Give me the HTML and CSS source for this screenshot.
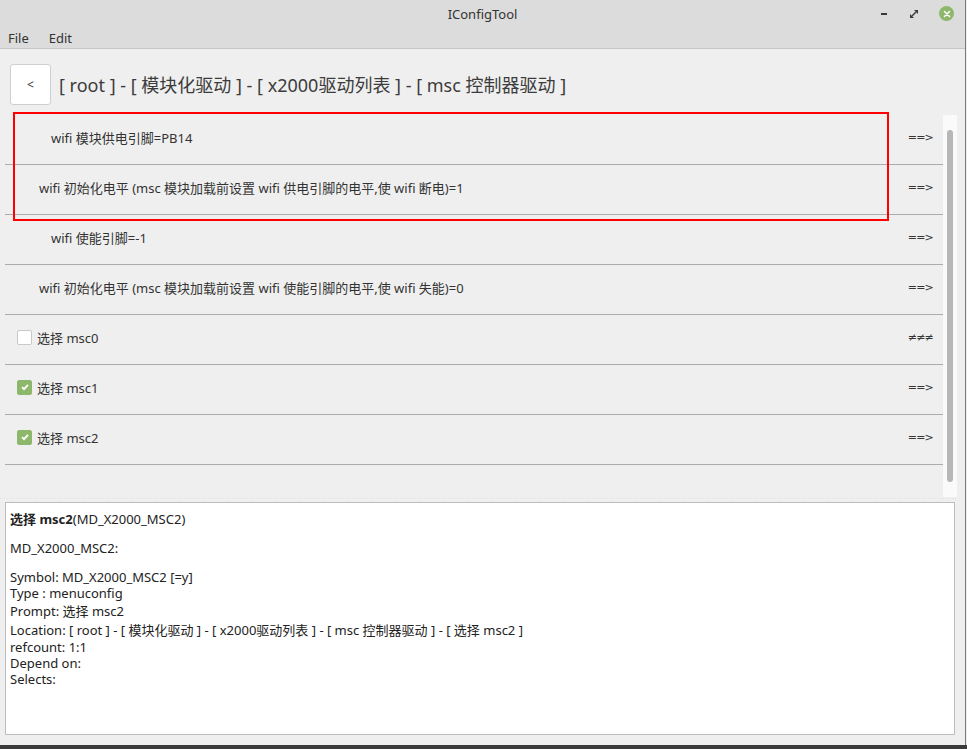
FILE: index.html
```html
<!DOCTYPE html>
<html lang="zh-CN">
<head>
    <meta charset="UTF-8">
    <title>IConfigTool</title>
    <link rel="stylesheet" href="styles.css">
</head>
<body>
    <div class="window">
        <div class="titlebar">
            <span></span>
            <span class="title">IConfigTool</span>
            <div class="controls">
                <span class="min"></span>
                <svg class="restore" width="8" height="8" viewBox="0 0 8 8">
                    <path d="M4 0h4v4zM0 4l4 4H0z" fill="#3a3a3a"/>
                    <path d="M2 6L6 2" stroke="#3a3a3a" stroke-width="1.4"/>
                </svg>
                <span class="close">
                    <svg width="8" height="8" viewBox="0 0 8 8">
                        <path d="M1.5 1.5l5 5M6.5 1.5l-5 5" stroke="#fff" stroke-width="1.6" stroke-linecap="round"/>
                    </svg>
                </span>
            </div>
        </div>
        <div class="menubar">
            <span>File</span>
            <span>Edit</span>
        </div>

        <div class="crumb">
            <button class="back">&lt;</button>
            <span class="path">[ root ] - [ 模块化驱动 ] - [ x2000驱动列表 ] - [ msc 控制器驱动 ]</span>
        </div>

        <div class="listarea">
            <div class="list">
                <div class="row indent2"><span>wifi 模块供电引脚=PB14</span><span class="arrow">==&gt;</span></div>
                <div class="row indent1"><span>wifi 初始化电平 (msc 模块加载前设置 wifi 供电引脚的电平,使 wifi 断电)=1</span><span class="arrow">==&gt;</span></div>
                <div class="row indent2"><span>wifi 使能引脚=-1</span><span class="arrow">==&gt;</span></div>
                <div class="row indent1"><span>wifi 初始化电平 (msc 模块加载前设置 wifi 使能引脚的电平,使 wifi 失能)=0</span><span class="arrow">==&gt;</span></div>
                <div class="row check"><span class="label"><span class="box"></span>选择 msc0</span><span class="arrow">≠≠≠</span></div>
                <div class="row check"><span class="label"><span class="box on"><svg width="10" height="10" viewBox="0 0 10 10"><path d="M2 5.2l2 2 4-4.4" fill="none" stroke="#fff" stroke-width="1.8"/></svg></span>选择 msc1</span><span class="arrow">==&gt;</span></div>
                <div class="row check"><span class="label"><span class="box on"><svg width="10" height="10" viewBox="0 0 10 10"><path d="M2 5.2l2 2 4-4.4" fill="none" stroke="#fff" stroke-width="1.8"/></svg></span>选择 msc2</span><span class="arrow">==&gt;</span></div>
                <div class="highlight"></div>
            </div>
            <div class="scrollbar"><div class="thumb"></div></div>
        </div>

        <div class="splitter"></div>

        <div class="info">
            <p><b>选择 msc2</b>(MD_X2000_MSC2)</p>
            <p class="gap">MD_X2000_MSC2:</p>
            <p class="gap">Symbol: MD_X2000_MSC2 [=y]</p>
            <p>Type : menuconfig</p>
            <p class="cjk">Prompt: 选择 msc2</p>
            <p class="cjk2">Location: [ root ] - [ 模块化驱动 ] - [ x2000驱动列表 ] - [ msc 控制器驱动 ] - [ 选择 msc2 ]</p>
            <p>refcount: 1:1</p>
            <p>Depend on:</p>
            <p>Selects:</p>
        </div>
        <div class="footer"></div>
    </div>
    <div class="behind"></div>
</body>
</html>
```

FILE: styles.css
```css
body {
    margin: 0;
    font-family: "Noto Sans", "Noto Sans CJK SC", sans-serif;
    font-size: 13px;
    color: #333;
    background: #efefef;
    width: 967px;
    height: 749px;
    overflow: hidden;
}

.window {
    width: 965px;
    height: 745px;
    border-right: 1px solid #7a7a7a;
    background: #efefef;
    display: flex;
    flex-direction: column;
}

.titlebar {
    height: 29px;
    background: #dcdcdc;
    display: grid;
    grid-template-columns: 1fr auto 1fr;
    align-items: center;
}

.title {
    font-size: 13px;
    color: #333;
    margin-top: -2px;
}

.controls {
    justify-self: end;
    display: flex;
    align-items: center;
    padding-right: 11px;
    margin-top: -2px;
}

.min {
    width: 6px;
    height: 2px;
    background: #3a3a3a;
    margin-right: 23px;
}

.restore {
    margin-right: 21px;
}

.close {
    width: 15px;
    height: 15px;
    border-radius: 50%;
    background: #8db86b;
    display: flex;
    align-items: center;
    justify-content: center;
}

.menubar {
    height: 19px;
    background: #dcdcdc;
    border-bottom: 1px solid #c6c6c6;
    display: flex;
    gap: 20px;
    padding-left: 8px;
    align-items: flex-start;
    line-height: 18px;
}

.crumb {
    display: flex;
    align-items: center;
    padding: 15px 0 0 10px;
    height: 41px;
}

.back {
    width: 41px;
    height: 41px;
    background: #fff;
    border: 1px solid #cfcfcf;
    border-radius: 3px;
    font-family: "Noto Sans", sans-serif;
    font-size: 12px;
    color: #333;
    padding: 0;
    margin-right: 8px;
}

.path {
    font-size: 18px;
    color: #3c3c3c;
    margin-top: -2px;
}

.listarea {
    margin-top: 10px;
    display: flex;
    height: 382px;
}

.list {
    position: relative;
    margin-left: 5px;
    width: 938px;
}

.row {
    height: 49px;
    box-sizing: border-box;
    height: 50px;
    border-bottom: 1px solid #acacac;
    display: flex;
    align-items: center;
    justify-content: space-between;
    padding-right: 10px;
    padding-bottom: 5px;
}

.indent2 { padding-left: 46px; }
.indent1 { padding-left: 34px; }
.check { padding-left: 12px; }

.label {
    display: flex;
    align-items: center;
}

.box {
    width: 13px;
    height: 13px;
    border: 1px solid #c8c8c8;
    background: #fff;
    border-radius: 2px;
    margin-right: 5px;
    display: flex;
    align-items: center;
    justify-content: center;
}

.box.on {
    background: #8db86b;
    border-color: #8db86b;
}

.arrow {
    font-family: "DejaVu Sans", sans-serif;
    font-size: 11px;
    color: #333;
    letter-spacing: -0.8px;
}

.highlight {
    position: absolute;
    left: 8px;
    top: -3px;
    width: 872px;
    height: 105px;
    border: 2px solid #f00;
}

.scrollbar {
    width: 14px;
    height: 382px;
    background: #fafafa;
    display: flex;
    justify-content: center;
    padding-top: 15px;
    box-sizing: border-box;
}

.thumb {
    width: 6px;
    height: 352px;
    border-radius: 3px;
    background: #b7b7b7;
}

.splitter {
    height: 3px;
    margin: 0 8px 2px 0;
    background-image: radial-gradient(#e0e0e0 0.6px, transparent 0.8px);
    background-size: 3px 3px;
}

.info {
    margin-left: 5px;
    width: 950px;
    height: 233px;
    box-sizing: border-box;
    background: #fff;
    border: 1px solid #bdbdbd;
    padding: 8px 4px;
    color: #222;
}

.info p {
    margin: 0;
    line-height: 16px;
}

.info b {
    font-weight: bold;
}

.info .gap { margin-top: 13px; }
.info .cjk { line-height: 20px; }
.info .cjk2 { line-height: 18px; }

.footer {
    flex: 1;
}

.behind {
    height: 4px;
    background: #3b3b3b;
}
```
